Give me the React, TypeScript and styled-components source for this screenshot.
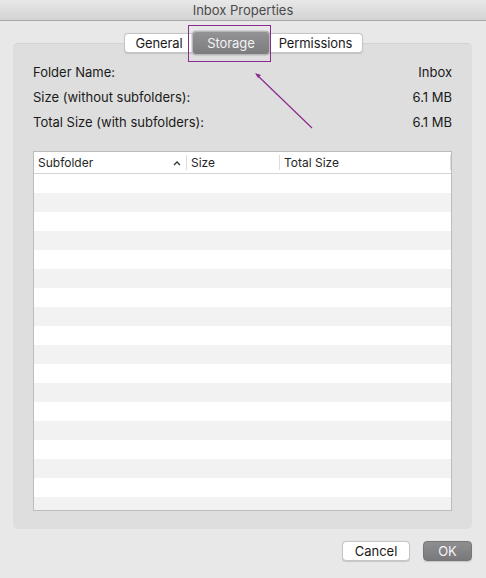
import React from "react";
import styled, { createGlobalStyle } from "styled-components";

const GlobalStyle = createGlobalStyle`
    html, body {
        margin: 0;
        padding: 0;
        background: #e8e8e8;
    }
    body {
        font-family: Inter, "Liberation Sans", Arial, sans-serif;
        -webkit-font-smoothing: antialiased;
    }
`;

const tabs = [
    { title: "General", width: 68 },
    { title: "Storage", width: 76 },
    { title: "Permissions", width: 93 },
];

const infoRows = [
    { label: "Folder Name:", value: "Inbox" },
    { label: "Size (without subfolders):", value: "6.1 MB" },
    { label: "Total Size (with subfolders):", value: "6.1 MB" },
];

const columns = [
    { title: "Subfolder", width: 153, sorted: true },
    { title: "Size", width: 93, sorted: false },
    { title: "Total Size", width: 171, sorted: false },
];

const App: React.FC = () => {
    return (
        <Window>
            <GlobalStyle />
            <TitleBar>Inbox Properties</TitleBar>

            <Content>
                <TabBar>
                    {tabs.map(tab => (
                        <Tab key={tab.title} $width={tab.width} $active={tab.title === "Storage"}>
                            {tab.title}
                        </Tab>
                    ))}
                </TabBar>

                <Panel>
                    <InfoList>
                        {infoRows.map(row => (
                            <InfoRow key={row.label}>
                                <span>{row.label}</span>
                                <span>{row.value}</span>
                            </InfoRow>
                        ))}
                    </InfoList>

                    <Table>
                        <HeaderRow>
                            {columns.map(col => (
                                <HeaderCell key={col.title} $width={col.width}>
                                    <span>{col.title}</span>
                                    {col.sorted && (
                                        <svg width="8" height="6" viewBox="0 0 8 6">
                                            <path
                                                d="M1 5 L4 2 L7 5"
                                                fill="none"
                                                stroke="#333"
                                                strokeWidth="1.3"
                                            />
                                        </svg>
                                    )}
                                </HeaderCell>
                            ))}
                        </HeaderRow>
                        <TableBody>
                            {Array.from({ length: 18 }).map((_, i) => (
                                <BodyRow key={i} $odd={i % 2 === 1} />
                            ))}
                        </TableBody>
                    </Table>
                </Panel>

                <Footer>
                    <Button>Cancel</Button>
                    <Button $primary>OK</Button>
                </Footer>

                <Highlight />
                <Arrow width="70" height="70" viewBox="0 0 70 70">
                    <path d="M58 57 L3 4" stroke="#8b2a8f" strokeWidth="1.2" fill="none" />
                    <path d="M1 2 L7 4 L4 7 Z" fill="#8b2a8f" />
                </Arrow>
            </Content>
        </Window>
    );
};

export default App;

const Window = styled.div`
    width: 486px;
    height: 578px;
    display: flex;
    flex-direction: column;
    background: #e8e8e8;
    overflow: hidden;
`;

const TitleBar = styled.div`
    height: 20px;
    flex: none;
    display: flex;
    align-items: center;
    justify-content: center;
    font-size: 13px;
    color: #4a4a4a;
    background: linear-gradient(#e8e8e8, #d3d3d3);
    border-bottom: 1px solid #a8a8a8;
`;

const Content = styled.div`
    position: relative;
    flex: 1;
    display: flex;
    flex-direction: column;
    padding: 12px 14px 0 13px;
`;

const TabBar = styled.div`
    position: relative;
    z-index: 1;
    align-self: flex-start;
    margin-left: 111px;
    margin-bottom: -10px;
    display: flex;
    height: 20px;
    background: #fff;
    border: 1px solid #c4c4c4;
    border-radius: 4px;
    box-sizing: border-box;
    box-shadow: 0 0.5px 1px rgba(0, 0, 0, 0.12);
`;

const Tab = styled.div<{ $active?: boolean; $width: number }>`
    width: ${props => props.$width}px;
    flex: none;
    display: flex;
    align-items: center;
    justify-content: center;
    font-size: 13px;
    letter-spacing: -0.1px;
    color: ${props => (props.$active ? "#f2f2f2" : "#1a1a1a")};
    background: ${props =>
        props.$active ? "linear-gradient(#939295, #7c7b7e)" : "transparent"};
    border-radius: ${props => (props.$active ? "3px" : "0")};
    margin: ${props => (props.$active ? "-2px 0" : "0")};
    box-shadow: ${props => (props.$active ? "0 0 0 1.5px #b8b8b8" : "none")};
`;

const Panel = styled.div`
    display: flex;
    flex-direction: column;
    height: 486px;
    box-sizing: border-box;
    padding: 15px 20px 18px 20px;
    background: #dedede;
    border-top: 1px solid #d2d2d2;
    border-radius: 5px;
`;

const InfoList = styled.div`
    display: flex;
    flex-direction: column;
    margin-bottom: 17px;
`;

const InfoRow = styled.div`
    height: 25px;
    display: flex;
    align-items: center;
    justify-content: space-between;
    font-size: 13px;
    color: #1a1a1a;
`;

const Table = styled.div`
    flex: 1;
    display: flex;
    flex-direction: column;
    background: #fff;
    border: 1px solid #bcbcbc;
    overflow: hidden;
`;

const HeaderRow = styled.div`
    height: 21px;
    flex: none;
    display: flex;
    border-bottom: 1px solid #d4d4d4;
`;

const HeaderCell = styled.div<{ $width: number }>`
    width: ${props => props.$width}px;
    flex: none;
    display: flex;
    align-items: center;
    justify-content: space-between;
    box-sizing: border-box;
    padding: 0 5px 0 4px;
    margin: 3px 0;
    font-size: 12px;
    color: #262626;
    border-right: 1px solid #dcdcdc;
`;

const TableBody = styled.div`
    flex: 1;
    overflow: hidden;
`;

const BodyRow = styled.div<{ $odd?: boolean }>`
    height: 19px;
    background: ${props => (props.$odd ? "#f2f2f2" : "#ffffff")};
`;

const Footer = styled.div`
    display: flex;
    justify-content: flex-end;
    gap: 13px;
    margin-top: 12px;
`;

const Button = styled.div<{ $primary?: boolean }>`
    height: 20px;
    width: ${props => (props.$primary ? "49px" : "68px")};
    box-sizing: border-box;
    display: flex;
    align-items: center;
    justify-content: center;
    font-size: 13px;
    border-radius: 4px;
    color: ${props => (props.$primary ? "#f4f4f4" : "#1a1a1a")};
    background: ${props =>
        props.$primary ? "linear-gradient(#8f8e91, #79787b)" : "#ffffff"};
    border: 1px solid ${props => (props.$primary ? "#767578" : "#c6c6c6")};
    box-shadow: 0 0.5px 1px rgba(0, 0, 0, 0.15);
`;

const Highlight = styled.div`
    position: absolute;
    left: 188px;
    top: 4px;
    width: 83px;
    height: 37px;
    box-sizing: border-box;
    border: 1.5px solid #8b2a8f;
    z-index: 2;
    pointer-events: none;
`;

const Arrow = styled.svg`
    position: absolute;
    left: 254px;
    top: 50px;
    z-index: 2;
    overflow: visible;
`;
